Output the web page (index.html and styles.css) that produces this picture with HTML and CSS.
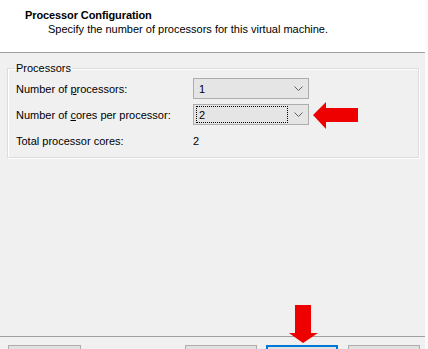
FILE: index.html
```html
<!DOCTYPE html>
<html lang="en">
<head>
  <meta charset="UTF-8" />
  <title>New Virtual Machine Wizard</title>
  <link rel="stylesheet" href="styles.css">
</head>
<body>
  <div class="wizard">
    <div class="header">
      <div class="title">Processor Configuration</div>
      <div class="subtitle">Specify the number of processors for this virtual machine.</div>
    </div>

    <div class="content">
      <fieldset class="group">
        <legend>Processors</legend>
        <div class="rows">
          <span class="label">Number of <u>p</u>rocessors:</span>
          <div class="combo">
            <span class="combo-value">1</span>
            <svg class="chevron" width="9" height="5" viewBox="0 0 9 5"><polyline points="0.5,0.5 4.5,4.5 8.5,0.5" fill="none" stroke="#606060" stroke-width="1"/></svg>
          </div>

          <span class="label">Number of <u>c</u>ores per processor:</span>
          <div class="combo">
            <span class="combo-value focused">2</span>
            <svg class="chevron" width="9" height="5" viewBox="0 0 9 5"><polyline points="0.5,0.5 4.5,4.5 8.5,0.5" fill="none" stroke="#606060" stroke-width="1"/></svg>
          </div>

          <span class="label">Total processor cores:</span>
          <span class="value">2</span>
        </div>
      </fieldset>
    </div>

    <!-- button captions sit below the visible area, so they are only labels -->
    <div class="footer">
      <button class="help" aria-label="Help"></button>
      <span class="spacer"></span>
      <button aria-label="Back"></button>
      <button class="default" aria-label="Next"></button>
      <button class="cancel" aria-label="Cancel"></button>
    </div>

    <!-- annotation arrows -->
    <svg class="arrow arrow-left" width="46" height="30" viewBox="0 0 46 30">
      <polygon points="0,13 13,0 13,6 45,6 45,20 13,20 13,27" fill="#ee0000"/>
    </svg>
    <svg class="arrow arrow-down" width="32" height="40" viewBox="0 0 32 40">
      <polygon points="7,0 23,0 23,28 30,28 15,38 1,28 7,28" fill="#ee0000"/>
    </svg>
  </div>
</body>
</html>
```

FILE: styles.css
```css
html, body {
  margin: 0;
  padding: 0;
  background-color: #fafafa;
}

body {
  font-family: "Liberation Sans", Arial, sans-serif;
  font-size: 11px;
  color: #000;
  overflow: hidden;
}

.wizard {
  position: relative;
  width: 425px;
  height: 349px;
  display: flex;
  flex-direction: column;
  background-color: #f0f0f0;
  overflow: hidden;
}

.header {
  height: 53px;
  flex: none;
  background-color: #fff;
  border-bottom: 1px solid #a0a0a0;
  box-sizing: border-box;
  padding: 8px 0 0 25px;
}

.title {
  font-weight: bold;
  line-height: 14px;
  letter-spacing: -0.1px;
}

.subtitle {
  margin-left: 23px;
  line-height: 14px;
}

.content {
  flex: 1;
  padding: 8px 6px 0 7px;
}

.group {
  margin: 0;
  padding: 2px 8px 6px 8px;
  border: 1px solid #dcdcdc;
  box-shadow: inset 1px 1px 0 #fff, 1px 1px 0 #fff;
}

.group legend {
  padding: 0 1px;
  margin-left: -1px;
  line-height: 15px;
}

.rows {
  display: grid;
  grid-template-columns: 177px 116px;
  grid-auto-rows: 21px;
  row-gap: 5px;
  align-items: center;
}

.label u {
  text-decoration: underline;
}

.combo {
  height: 21px;
  box-sizing: border-box;
  border: 1px solid #adadad;
  background-color: #e5e5e5;
  display: flex;
  align-items: center;
  padding: 0 5px 0 2px;
}

.combo-value {
  flex: 1;
  height: 17px;
  line-height: 16px;
  padding-left: 2px;
  box-sizing: border-box;
  margin-right: 6px;
  border: 1px dotted transparent;
}

.combo-value.focused {
  border-color: #000;
}

.chevron {
  display: block;
}

.footer {
  height: 4px;
  flex: none;
  border-top: 1px solid #a0a0a0;
  padding: 8px 5px 0 8px;
  display: flex;
  align-items: flex-start;
}

.footer button {
  width: 72px;
  height: 23px;
  flex: none;
  border: 1px solid #adadad;
  background-color: #e1e1e1;
  margin-left: 8px;
  padding: 0;
}

.footer button.help {
  width: 73px;
  margin-left: 0;
}

.footer button.default {
  border: 2px solid #0078d7;
  margin-left: 9px;
}

.footer button.cancel {
  margin-left: 10px;
}

.spacer {
  flex: 1;
}

.arrow {
  position: absolute;
}

.arrow-left {
  left: 313px;
  top: 102px;
}

.arrow-down {
  left: 288px;
  top: 305px;
}
```
